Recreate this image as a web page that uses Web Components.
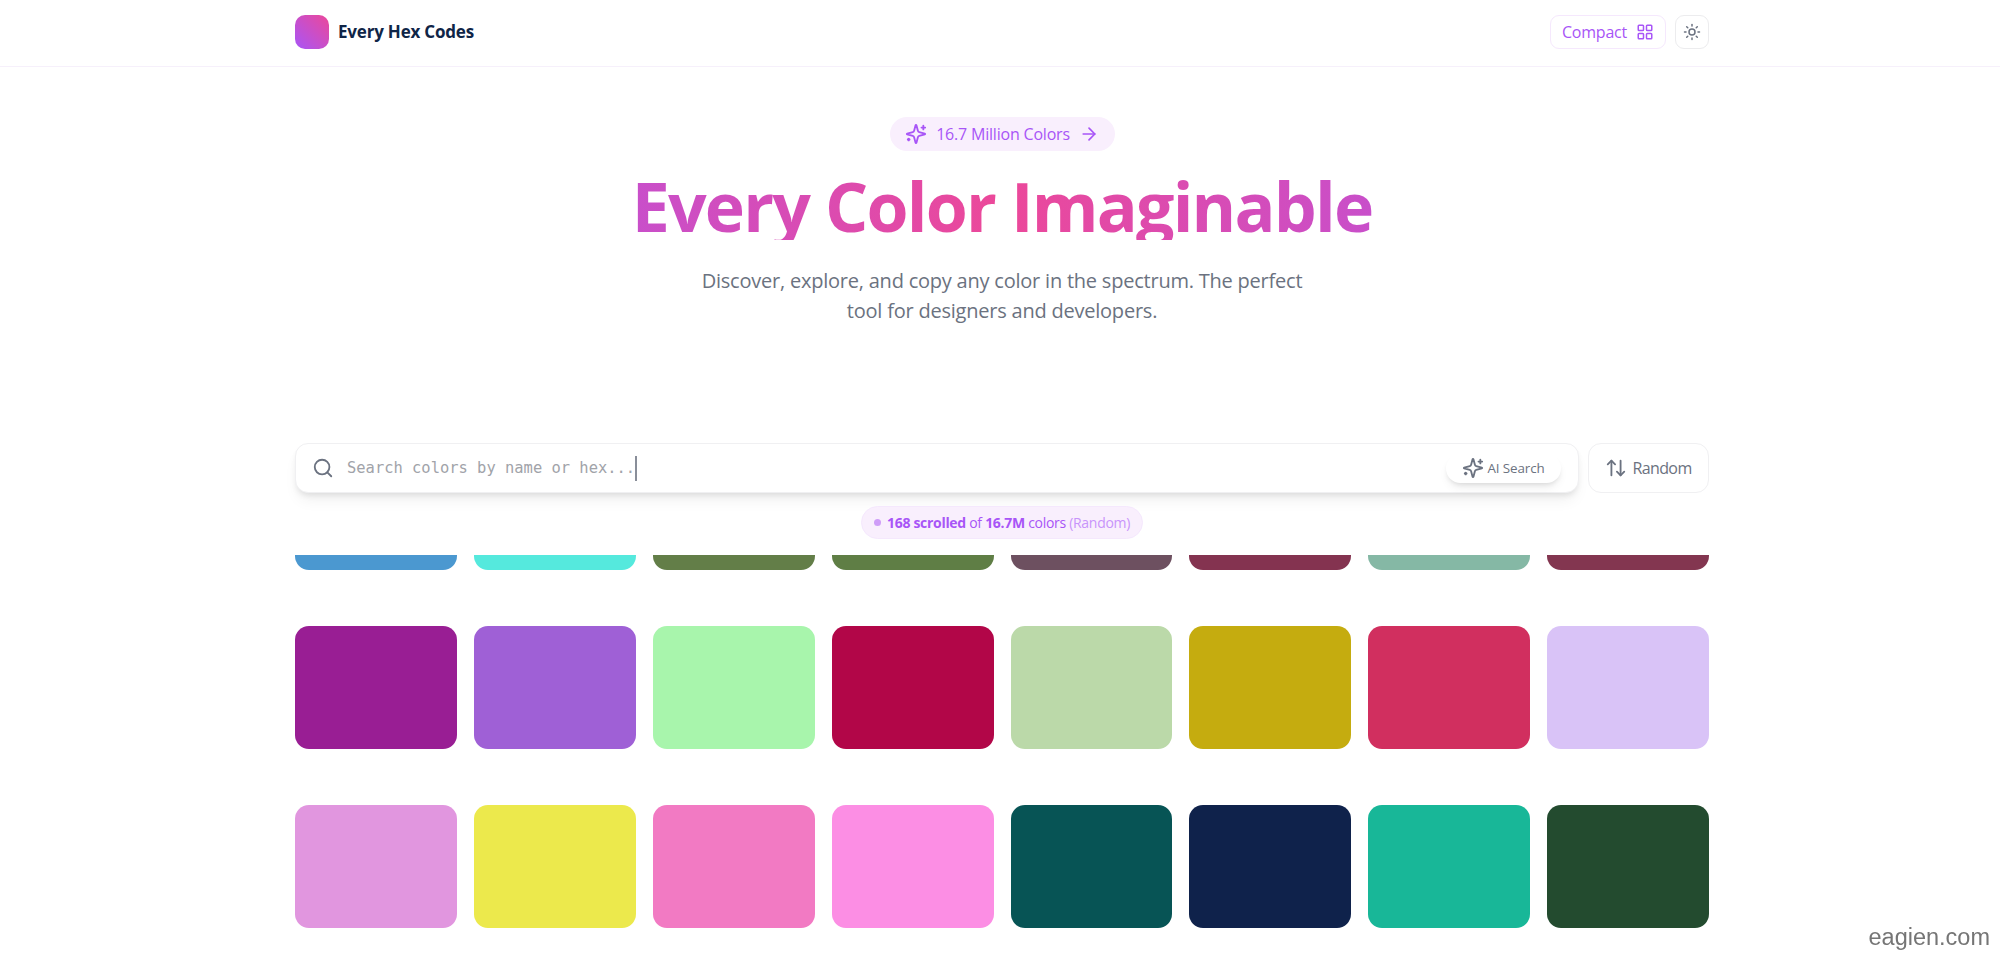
<!DOCTYPE html>
<html lang="en"><head><meta charset="utf-8"><title>Every Hex Codes</title>
<style>
html,body{margin:0;height:956px;overflow:hidden;background:#fff}
body{padding:0 0 0 4px;box-sizing:border-box;font-family:"Open Sans","Noto Sans",sans-serif;color:#0f2547}
</style></head><body>
<x-header></x-header>
<x-hero></x-hero>
<x-toolbar></x-toolbar>
<x-status></x-status>
<x-grid></x-grid>
<x-watermark>eagien.com</x-watermark>
<script>
const ICONS={
 sparkles:'<path d="M9.937 15.5A2 2 0 0 0 8.5 14.063l-6.135-1.582a.5.5 0 0 1 0-.962L8.5 9.936A2 2 0 0 0 9.937 8.5l1.582-6.135a.5.5 0 0 1 .963 0L14.063 8.5A2 2 0 0 0 15.5 9.937l6.135 1.581a.5.5 0 0 1 0 .964L15.5 14.063a2 2 0 0 0-1.437 1.437l-1.582 6.135a.5.5 0 0 1-.963 0z"/><path d="M20 3v4"/><path d="M22 5h-4"/><path d="M4 17v2"/><path d="M5 18H3"/>',
 arrow:'<path d="M5 12h14"/><path d="m12 5 7 7-7 7"/>',
 search:'<circle cx="11" cy="11" r="8"/><path d="m21 21-4.3-4.3"/>',
 updown:'<path d="m21 16-4 4-4-4"/><path d="M17 20V4"/><path d="m3 8 4-4 4 4"/><path d="M7 4v16"/>',
 sun:'<circle cx="12" cy="12" r="4"/><path d="M12 2v2"/><path d="M12 20v2"/><path d="m4.93 4.93 1.41 1.41"/><path d="m17.66 17.66 1.41 1.41"/><path d="M2 12h2"/><path d="M20 12h2"/><path d="m6.34 17.66-1.41 1.41"/><path d="m19.07 4.93-1.41 1.41"/>',
 grid:'<rect width="7" height="7" x="3" y="3" rx="1"/><rect width="7" height="7" x="14" y="3" rx="1"/><rect width="7" height="7" x="14" y="14" rx="1"/><rect width="7" height="7" x="3" y="14" rx="1"/>'
};
const icon=(n,s,w=2)=>`<svg width="${s}" height="${s}" viewBox="0 0 24 24" fill="none" stroke="currentColor" stroke-width="${w}" stroke-linecap="round" stroke-linejoin="round" aria-hidden="true">${ICONS[n]}</svg>`;
class Base extends HTMLElement{
 connectedCallback(){ if(!this.shadowRoot){ this.attachShadow({mode:'open'}).innerHTML=this.html(); } }
}
customElements.define('x-header',class extends Base{html(){return `<style>
:host{display:block;height:63px;padding:0 0 3px 4px;border-bottom:1px solid #f6f0fb;margin-left:-4px}
.in{width:1414px;height:100%;margin:0 auto;display:flex;align-items:center;gap:9px}
.logo{width:34px;height:34px;border-radius:10px;background:linear-gradient(to top right,#a855f7,#ec4899);flex:none}
.name{font:700 17px/1 "Open Sans",sans-serif;color:#0f2547;letter-spacing:-.2px;flex:1}
button{font:400 16px "Open Sans",sans-serif;background:#fff;display:flex;align-items:center;justify-content:center;padding:0;box-sizing:border-box;height:34px;border-radius:9px}
.c{width:116px;gap:9px;color:#a855f7;border:1px solid #f5e8fd;letter-spacing:-.2px}
.t{width:34px;color:#6b7280;border:1px solid #ececee}
</style><div class="in"><span class="logo"></span><span class="name">Every Hex Codes</span>
<button class="c">Compact ${icon('grid',18)}</button><button class="t">${icon('sun',18)}</button></div>`}});
customElements.define('x-hero',class extends Base{html(){return `<style>
:host{display:block;width:1414px;margin:0 auto;height:376px;padding-top:50px;box-sizing:border-box;text-align:center}
.pill{display:inline-flex;align-items:center;box-sizing:border-box;width:225px;height:34px;justify-content:center;gap:9px;border-radius:17px;background:#f9effd;color:#a855f7;font:400 16px "Open Sans",sans-serif;letter-spacing:-.2px;vertical-align:top}
h1{margin:9px 0 0;font:700 68px/92px "Open Sans",sans-serif;letter-spacing:-1.8px;height:80px;background:linear-gradient(to right,#a855f7,#ec4899,#a855f7);-webkit-background-clip:text;background-clip:text;color:transparent}
p{margin:26px auto 0;width:625px;font:400 20px/30px "Open Sans",sans-serif;color:#6b7280;letter-spacing:-.22px}
</style><span class="pill">${icon('sparkles',22)}<span>16.7 Million Colors</span>${icon('arrow',20)}</span>
<h1>Every Color Imaginable</h1>
<p>Discover, explore, and copy any color in the spectrum. The perfect tool for designers and developers.</p>`}});
customElements.define('x-toolbar',class extends Base{html(){return `<style>
:host{display:flex;width:1414px;margin:0 auto;gap:9px;height:50px}
.box{flex:1;display:flex;align-items:center;box-sizing:border-box;border:1px solid #f0f0f2;border-radius:13px;background:#fff;box-shadow:0 10px 15px -3px rgba(0,0,0,.06),0 4px 6px -2px rgba(0,0,0,.1);padding:0 17px 0 16px;color:#6b7280}
.ph{margin-left:13px;font:400 15.45px "DejaVu Sans Mono",monospace;color:#a1a3a9}
.caret{width:2px;height:25px;background:#6b7280;opacity:.8;flex:none}
.sp{flex:1}
.ai{display:flex;align-items:center;justify-content:center;gap:3px;width:115px;height:29px;border-radius:15px;background:#fff;box-shadow:0 6px 10px -2px rgba(0,0,0,.08),0 3px 5px -2px rgba(0,0,0,.1);font:400 13.4px "Open Sans",sans-serif;letter-spacing:-.1px;color:#6b7280}
.r{width:121px;box-sizing:border-box;border:1px solid #f0f0f2;border-radius:13px;background:#fff;color:#6b7280;display:flex;align-items:center;justify-content:center;gap:5px;font:400 16px "Open Sans",sans-serif;letter-spacing:-.6px}
</style><div class="box">${icon('search',22)}<span class="ph">Search colors by name or hex...</span><span class="caret"></span><span class="sp"></span>
<span class="ai">${icon('sparkles',22)}<span>AI Search</span></span></div>
<div class="r">${icon('updown',22)}<span>Random</span></div>`}});
customElements.define('x-status',class extends Base{html(){return `<style>
:host{display:flex;justify-content:center;margin-top:13px;height:33px}
.p{display:flex;align-items:center;box-sizing:border-box;width:282px;height:33px;justify-content:center;gap:6px;border:1px solid #f5e8fd;border-radius:17px;background:#f9effd;color:#a855f7;font:400 14px "Open Sans",sans-serif;letter-spacing:-.3px;white-space:pre}
.d{width:7px;height:7px;border-radius:50%;background:#cf9df8}
b{font-weight:700}.m{color:#c894fb}
</style><div class="p"><span class="d"></span><span><b>168 scrolled</b> of <b>16.7M</b> colors <span class="m">(Random)</span></span></div>`}});
customElements.define('x-swatch',class extends Base{html(){return `<style>
:host{display:block;height:122.5px;border-radius:14px;background:var(--c)}
</style>`}});
customElements.define('x-grid',class extends Base{html(){
 const rows=[['#4b98d0','#55e9dd','#637e48','#5f7e45','#6d5060','#843350','#85b8a5','#833650'],
 ['#991e94','#9f60d6','#a8f5ac','#b20648','#bbd9a9','#c5ac0f','#d12f5f','#d9c3f7'],
 ['#e196df','#ece94c','#f27ac3','#fc8ee4','#075455','#0f224b','#18b798','#234b2f']];
 return `<style>
:host{display:block;width:1414px;margin:16px auto 0;overflow:hidden;height:400px}
.g{display:grid;grid-template-columns:repeat(8,1fr);column-gap:17px;row-gap:56.5px;margin-top:-108px}
</style><div class="g">${rows.flat().map(c=>`<x-swatch style="--c:${c}"></x-swatch>`).join('')}</div>`}});
customElements.define('x-watermark',class extends Base{html(){return `<style>
:host{position:fixed;right:10px;bottom:5px;font:400 23.5px/28px "Liberation Sans",Arial,sans-serif;color:#757575}
</style><slot></slot>`}});
</script></body></html>
